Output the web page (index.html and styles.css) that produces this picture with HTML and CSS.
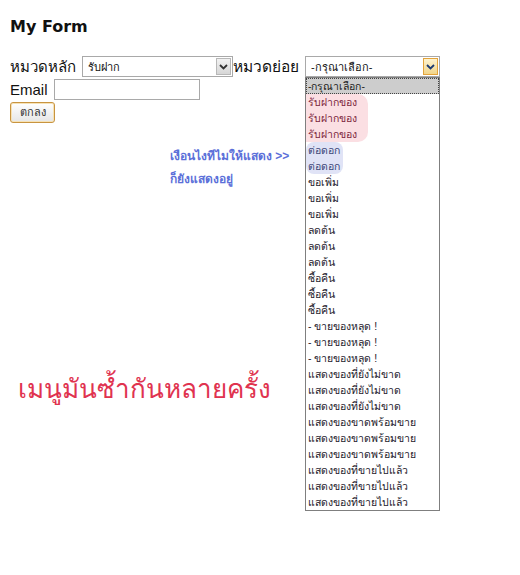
FILE: index.html
```html
<!DOCTYPE html>
<html lang="th">
<head>
<meta charset="utf-8">
<title>My Form</title>
<link rel="stylesheet" href="styles.css">
</head>
<body>
<div class="page">
  <h1 class="title">My Form</h1>
  <form class="form">
    <div class="row">
      <span class="label">หมวดหลัก</span>
      <div class="select select-main">
        <span class="select-value">รับฝาก</span>
        <span class="arrow"><svg width="9" height="6" viewBox="0 0 9 6"><path d="M1 1 L4.5 4.5 L8 1" fill="none" stroke="#333" stroke-width="1.8"/></svg></span>
      </div>
      <span class="label label-sub">หมวดย่อย</span>
      <div class="select select-sub">
        <span class="select-value">-กรุณาเลือก-</span>
        <span class="arrow arrow-hover"><svg width="9" height="6" viewBox="0 0 9 6"><path d="M1 1 L4.5 4.5 L8 1" fill="none" stroke="#1c3a72" stroke-width="1.8"/></svg></span>
        <div class="menu">
          <div class="opt opt-focus">-กรุณาเลือก-</div>
          <div class="group group-pink">
            <div class="opt">รับฝากของ</div>
            <div class="opt">รับฝากของ</div>
            <div class="opt">รับฝากของ</div>
          </div>
          <div class="group group-blue">
            <div class="opt">ต่อดอก</div>
            <div class="opt">ต่อดอก</div>
          </div>
          <div class="opt">ขอเพิ่ม</div>
          <div class="opt">ขอเพิ่ม</div>
          <div class="opt">ขอเพิ่ม</div>
          <div class="opt">ลดต้น</div>
          <div class="opt">ลดต้น</div>
          <div class="opt">ลดต้น</div>
          <div class="opt">ซื้อคืน</div>
          <div class="opt">ซื้อคืน</div>
          <div class="opt">ซื้อคืน</div>
          <div class="opt">- ขายของหลุด !</div>
          <div class="opt">- ขายของหลุด !</div>
          <div class="opt">- ขายของหลุด !</div>
          <div class="opt">แสดงของที่ยังไม่ขาด</div>
          <div class="opt">แสดงของที่ยังไม่ขาด</div>
          <div class="opt">แสดงของที่ยังไม่ขาด</div>
          <div class="opt">แสดงของขาดพร้อมขาย</div>
          <div class="opt">แสดงของขาดพร้อมขาย</div>
          <div class="opt">แสดงของขาดพร้อมขาย</div>
          <div class="opt">แสดงของที่ขายไปแล้ว</div>
          <div class="opt">แสดงของที่ขายไปแล้ว</div>
          <div class="opt">แสดงของที่ขายไปแล้ว</div>
        </div>
      </div>
    </div>
    <div class="row">
      <span class="label">Email</span>
      <div class="input"></div>
    </div>
    <div class="row">
      <div class="button">ตกลง</div>
    </div>
  </form>
  <div class="note-blue">
    <div>เงือนไงทีไมให้แสดง &gt;&gt;</div>
    <div>ก็ยังแสดงอยู่</div>
  </div>
  <div class="note-red">เมนูมันซ้ำกันหลายครั้ง</div>
</div>
</body>
</html>
```

FILE: styles.css
```css
html, body {
  margin: 0;
  padding: 0;
  background: #ffffff;
}

.page {
  padding: 0 10px;
  min-height: 575px;
  box-sizing: border-box;
  font-family: "Liberation Sans", "Noto Sans", sans-serif;
  color: #111;
}

.title {
  margin: 17px 0 0;
  font-family: "DejaVu Sans", sans-serif;
  font-size: 16px;
  line-height: 20px;
  font-weight: bold;
}

.form {
  margin-top: 19px;
  display: flex;
  flex-direction: column;
  gap: 2px;
}

.row {
  display: flex;
  align-items: center;
  height: 21px;
}

.label {
  font-size: 15px;
  line-height: 21px;
  margin-right: 6px;
}

.label-sub {
  font-size: 15.5px;
  margin-right: 6px;
}

.select {
  position: relative;
  height: 21px;
  box-sizing: border-box;
  border: 1px solid #a9a9a9;
  background: #fff;
  display: flex;
  align-items: center;
  justify-content: space-between;
}

.select-main {
  width: 151px;
}

.select-sub {
  width: 135px;
}

.select-value {
  font-size: 11px;
  padding-left: 5px;
  color: #111;
}

.arrow {
  width: 15px;
  height: 17px;
  margin-right: 1px;
  box-sizing: border-box;
  border: 1px solid #b8b8b8;
  background: linear-gradient(#f2f2f2, #d6d6d6);
  display: flex;
  align-items: center;
  justify-content: center;
}

.arrow-hover {
  border-color: #e3a33a;
  background: linear-gradient(#fdf3d0, #f1d58a);
}

.menu {
  position: absolute;
  top: 100%;
  left: -1px;
  width: 135px;
  margin-top: 1px;
  box-sizing: border-box;
  border: 1px solid #7f7f7f;
  background: #fff;
  z-index: 2;
}

.opt {
  height: 16px;
  line-height: 16px;
  font-size: 10.5px;
  padding-left: 2px;
  color: #1e1a2c;
  white-space: nowrap;
}

.opt-focus {
  background: #cdcdcd;
  outline: 1px dotted #444;
  outline-offset: -1px;
  color: #222;
}

.group {
  width: max-content;
  padding-right: 11px;
}

.group-pink {
  background: #fbdfe3;
  border-radius: 0 10px 10px 0;
}

.group-pink .opt {
  color: #7c1f3c;
}

.group-blue {
  background: #e0e3f6;
  border-radius: 8px;
  padding-right: 3px;
}

.group-blue .opt {
  color: #3b4679;
}

.input {
  width: 146px;
  height: 21px;
  box-sizing: border-box;
  border: 1px solid #a9a9a9;
  background: #fff;
}

.button {
  width: 45px;
  height: 21px;
  box-sizing: border-box;
  border: 1px solid #c89440;
  border-radius: 3px;
  background: linear-gradient(#ffffff, #e6e6e6);
  box-shadow: inset 0 0 0 1px #f6e2b6;
  font-size: 11px;
  line-height: 19px;
  text-align: center;
  color: #333;
}

.note-blue {
  margin-top: 22px;
  padding-left: 160px;
  font-size: 12px;
  line-height: 23px;
  font-weight: bold;
  color: #5b6fd9;
}

.note-red {
  margin-top: 183px;
  padding-left: 8px;
  font-size: 26px;
  line-height: 30px;
  color: #e0334f;
}
```
